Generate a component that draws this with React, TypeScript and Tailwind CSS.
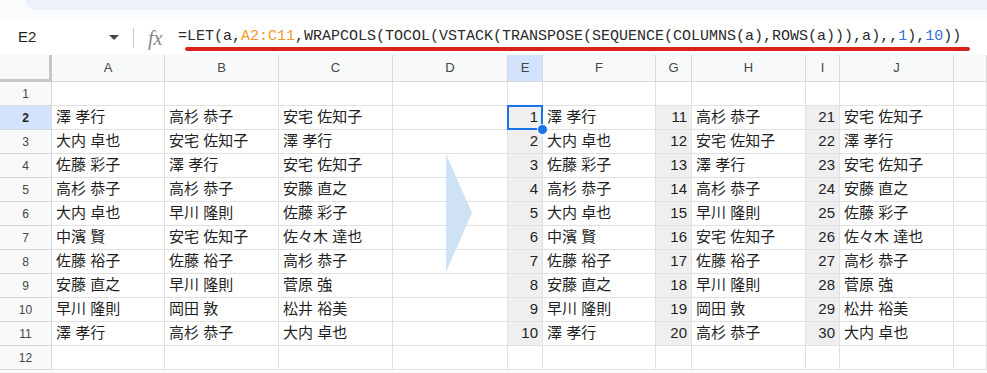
import React from 'react'

const colA = ['澤 孝行', '大内 卓也', '佐藤 彩子', '高杉 恭子', '大内 卓也', '中濱 賢', '佐藤 裕子', '安藤 直之', '早川 隆則', '澤 孝行']
const colB = ['高杉 恭子', '安宅 佐知子', '澤 孝行', '高杉 恭子', '早川 隆則', '安宅 佐知子', '佐藤 裕子', '早川 隆則', '岡田 敦', '高杉 恭子']
const colC = ['安宅 佐知子', '澤 孝行', '安宅 佐知子', '安藤 直之', '佐藤 彩子', '佐々木 達也', '高杉 恭子', '菅原 強', '松井 裕美', '大内 卓也']

const letters = ['A', 'B', 'C', 'D', 'E', 'F', 'G', 'H', 'I', 'J', '']

const cellBase = 'h-[24px] border-r border-b border-[#e1e1e1] flex items-center whitespace-nowrap'

function TextCell({ value }: { value?: string }) {
  return <div className={`${cellBase} overflow-hidden pl-[4px] text-[15px] text-[#1f1f1f]`}>{value}</div>
}

function NumCell({ value, selected = false }: { value: number; selected?: boolean }) {
  return (
    <div className={`${cellBase} relative justify-end pr-[4px] bg-[#efefef] text-[15px] text-[#1f1f1f] ${selected ? 'z-10' : ''}`}>
      {value}
      {selected && (
        <>
          <div className="absolute -left-px -top-px w-[36px] h-[25px] border-2 border-[#1a73e8]" />
          <div className="absolute right-[-6px] bottom-[-6px] w-[11px] h-[11px] rounded-full bg-[#1a73e8] border border-white" />
        </>
      )}
    </div>
  )
}

function EmptyCell() {
  return <div className={cellBase} />
}

export default function App() {
  return (
    <div
      className="w-[987px] h-[373px] overflow-hidden bg-[#f9fbfd] relative"
      style={{ fontFamily: '"Liberation Sans", "Noto Sans CJK JP", sans-serif' }}
    >
      {/* top toolbar edge */}
      <div className="h-[10px] ml-[26px] bg-[#edf2fa] rounded-bl-[14px]" />
      <div className="h-[10px]" />

      {/* formula bar */}
      <div className="h-[35px] bg-white flex items-center">
        <div className="w-[133px] flex items-center pl-[18px] pr-[14px]">
          <span className="text-[15px] text-[#1f1f1f]">E2</span>
          <svg className="ml-auto" width="10" height="5" viewBox="0 0 10 5">
            <polygon points="0,0 10,0 5,5" fill="#444746" />
          </svg>
        </div>
        <div className="w-px h-[20px] bg-[#c4c7c5]" />
        <span
          className="ml-[14px] w-[30px] text-[20px] italic text-[#80868b] leading-none"
          style={{ fontFamily: '"Liberation Serif", serif' }}
        >
          fx
        </span>
        <div className="text-[15px] text-[#2b2b2b] whitespace-nowrap" style={{ fontFamily: '"Liberation Mono", monospace' }}>
          =LET(a,<span className="text-[#f09a2a]">A2:C11</span>,WRAPCOLS(TOCOL(VSTACK(TRANSPOSE(SEQUENCE(COLUMNS(a),ROWS(a))),a),,
          <span className="text-[#3a6fd8]">1</span>),<span className="text-[#3a6fd8]">10</span>))
        </div>
      </div>

      {/* grid */}
      <div className="grid grid-cols-[52px_113px_114px_114px_115px_35px_113px_36px_114px_34px_114px_33px] bg-white">
        <div className="h-[27px] bg-[#f8f9fa] border-r-[3px] border-b-[3px] border-[#c7c7c7]" />
        {letters.map((l, i) => (
          <div
            key={i}
            className={`h-[27px] border-r border-b border-[#d9d9d9] flex items-center justify-center text-[13px] text-[#444746] ${
              l === 'E' ? 'bg-[#d3e3fd] text-[#0b57d0]' : 'bg-[#f8f9fa]'
            }`}
          >
            {l}
          </div>
        ))}

        {Array.from({ length: 12 }, (_, r) => {
          const row = r + 1
          const d = row >= 2 && row <= 11 ? r - 1 : -1
          return (
            <React.Fragment key={row}>
              <div
                className={`h-[24px] border-r border-b border-[#d9d9d9] flex items-center justify-center text-[12px] ${
                  row === 2 ? 'bg-[#d3e3fd] font-bold text-[#1f1f1f]' : 'bg-[#f8f9fa] text-[#444746]'
                }`}
              >
                {row}
              </div>
              {d >= 0 ? (
                <>
                  <TextCell value={colA[d]} />
                  <TextCell value={colB[d]} />
                  <TextCell value={colC[d]} />
                  <EmptyCell />
                  <NumCell value={d + 1} selected={d === 0} />
                  <TextCell value={colA[d]} />
                  <NumCell value={d + 11} />
                  <TextCell value={colB[d]} />
                  <NumCell value={d + 21} />
                  <TextCell value={colC[d]} />
                  <EmptyCell />
                </>
              ) : (
                Array.from({ length: 11 }, (_, c) => <EmptyCell key={c} />)
              )}
            </React.Fragment>
          )
        })}
      </div>

      {/* arrow */}
      <svg className="absolute left-[446px] top-[154px]" width="27" height="118" viewBox="0 0 27 118">
        <polygon points="0,0 26,59 0,118" fill="#cfe2f3" />
      </svg>

      {/* red underline annotation */}
      <div className="absolute left-[185px] top-[47px] w-[785px] h-[4px] rounded-full bg-[#d8231b]" />
    </div>
  )
}
